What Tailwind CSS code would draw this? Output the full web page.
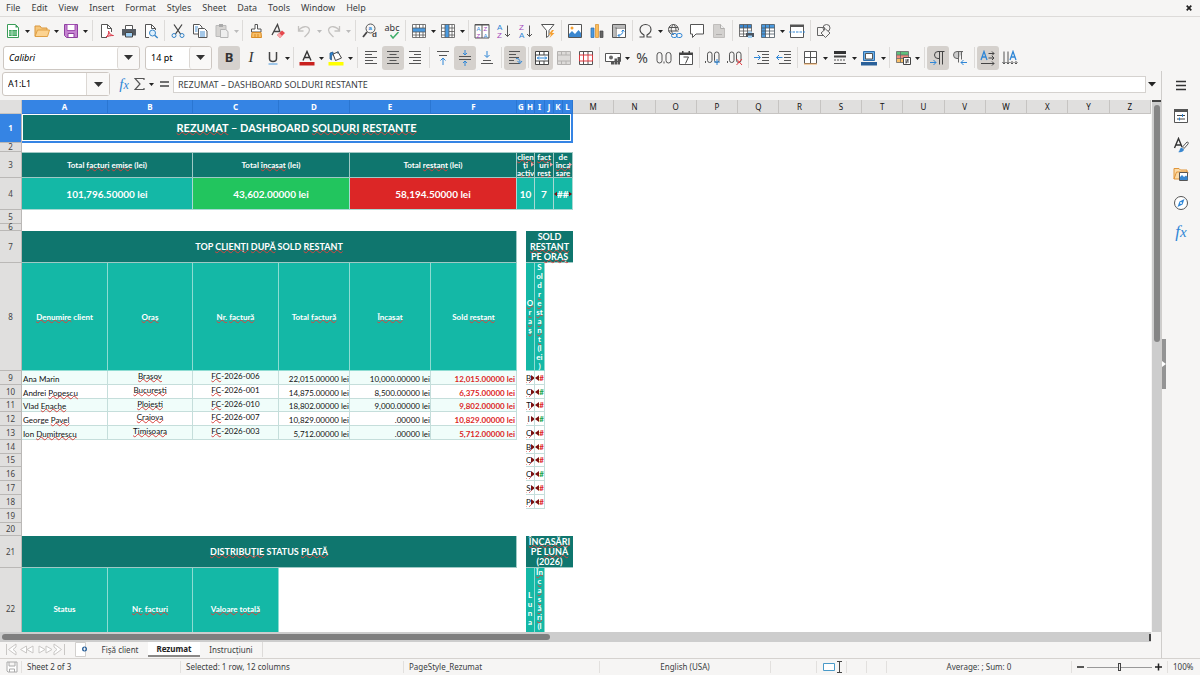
<!DOCTYPE html>
<html lang="ro">
<head>
<meta charset="utf-8">
<title>Rezumat</title>
<script src="https://cdn.jsdelivr.net/npm/@tailwindcss/browser@4"></script>
</head>
<body class="flex h-screen flex-col overflow-hidden bg-[#f6f5f4] font-['Noto_Sans',sans-serif] text-[9px] text-[#3a3d3f] [&_svg]:shrink-0">

<svg class="!hidden" aria-hidden="true">
  <symbol id="dd" viewBox="0 0 7 16"><path d="M1 7h5l-2.500 3z" fill="#222"/></symbol>
  <symbol id="ddg" viewBox="0 0 7 16"><path d="M1 7h5l-2.500 3z" fill="#bbb"/></symbol>
  <symbol id="over" viewBox="0 0 4 6"><path d="M0 0l4 3-4 3z" fill="#7a1010"/></symbol>
  <symbol id="under" viewBox="0 0 4 6"><path d="M4 0L0 3l4 3z" fill="#7a1010"/></symbol>
</svg>

<header>
  <nav class="flex h-[17px] items-center gap-[11px] border-b border-[#dddbd9] pl-[6px] pr-2" aria-label="Menu">
    <button>File</button><button>Edit</button><button>View</button><button>Insert</button><button>Format</button><button>Styles</button><button>Sheet</button><button>Data</button><button>Tools</button><button>Window</button><button>Help</button>
    <button class="ml-auto" aria-label="Close"><svg width="6" height="6" viewBox="0 0 6 6"><path d="M.7.7l4.600 4.600M5.300.7L.7 5.300" stroke="#222" stroke-width="1.700"/></svg></button>
  </nav>

  <!-- Standard toolbar -->
  <div class="flex h-[27px] items-center pl-[2px] [&_button]:flex [&_button]:h-6 [&_button]:w-[22px] [&_button]:shrink-0 [&_button]:items-center [&_button]:justify-center [&_button.w-\[7px\]]:w-[7px] [&_i]:h-[21px] [&_i]:w-[5px] [&_i]:shrink-0 [&_i]:bg-[linear-gradient(#dddbd9,#dddbd9)] [&_i]:bg-[length:1px_100%] [&_i]:bg-center [&_i]:bg-no-repeat [&_i.w-\[7px\]]:w-[7px]" role="toolbar" aria-label="Standard">
    <button aria-label="New"><svg width="16" height="16" viewBox="0 0 16 16" fill="none"><path d="M2.500 1.500h8l3 3v10h-11z" fill="#fff" stroke="#3a9c58"/><path d="M10.500 1.500v3h3z" fill="#3a9c58"/><path d="M4 7h8v6H4z" fill="#3fa65f"/><path d="M4 9h8M4 11h8M7 7v6" stroke="#c9ecd2" stroke-width=".7"/></svg></button><button class="w-[7px]" aria-label="New menu"><svg width="7" height="16"><use href="#dd"/></svg></button>
    <button aria-label="Open"><svg width="16" height="16" viewBox="0 0 16 16"><path d="M1 13V3h5l1.500 2H13v2" fill="#f6c77c" stroke="#d9963c"/><path d="M1 13.500L3.500 7h12L13.500 13.500z" fill="#fcd391" stroke="#e0a044"/></svg></button><button class="w-[7px]" aria-label="Open menu"><svg width="7" height="16"><use href="#dd"/></svg></button>
    <button aria-label="Save"><svg width="16" height="16" viewBox="0 0 16 16"><path d="M1.500 1.500h13v13h-11l-2-2z" fill="#c583d0" stroke="#8e3fa0"/><path d="M4 1.500h8v6H4z" fill="#fff" stroke="#a352b3"/><path d="M5 10.500h6v4H5z" fill="#fff" stroke="#8e3fa0"/></svg></button><button class="w-[7px]" aria-label="Save menu"><svg width="7" height="16"><use href="#dd"/></svg></button>
    <i class="w-[7px]"></i>
    <button aria-label="Export as PDF"><svg width="16" height="16" viewBox="0 0 16 16" fill="none"><path d="M8 14.500H2.500v-13h6l4 4V9" fill="#fff" stroke="#555"/><path d="M8.500 1.500v4h4" stroke="#555"/><path d="M7 14c2-1 3-4 2.500-6 1 3 3 4.500 5 4.500-3 0-5 .5-7.500 1.500z" stroke="#d93a4a" fill="#f3b0b6"/></svg></button>
    <button aria-label="Print"><svg width="16" height="16" viewBox="0 0 16 16"><path d="M4.500 2.500h7v4h-7z" fill="#fff" stroke="#555"/><path d="M1 6h14v6.500H1z" fill="#555b62"/><path d="M4.500 9.500h7v4.500h-7z" fill="#9fd0f5" stroke="#444"/></svg></button>
    <button aria-label="Print preview"><svg width="16" height="16" viewBox="0 0 16 16" fill="none"><path d="M6 14.500H2.500v-13h6l4 4V7" fill="#fff" stroke="#555"/><path d="M8.500 1.500v4h4" stroke="#555"/><circle cx="9.500" cy="10" r="3" fill="#dff0fd" stroke="#3584c8"/><path d="M11.700 12.200l3 2.800" stroke="#3584c8" stroke-width="1.400"/></svg></button>
    <i></i>
    <button aria-label="Cut"><svg width="16" height="16" viewBox="0 0 16 16" fill="none"><path d="M4 1.500l6.500 9.500M12 1.500L5.500 11" stroke="#444" stroke-width="1.300"/><circle cx="4" cy="12.500" r="2" stroke="#3584c8"/><circle cx="12" cy="12.500" r="2" stroke="#3584c8"/></svg></button>
    <button aria-label="Copy"><svg width="16" height="16" viewBox="0 0 16 16"><path d="M1.500 1.500h6l2.500 2.500v7H1.500z" fill="#fff" stroke="#555"/><path d="M6.500 5.500h6l2.500 2.500v6.500H6.500z" fill="#fff" stroke="#555"/><path d="M3 4h3M3 6h2.500M3 8h2.500M8 9h5M8 11h5M8 13h5" stroke="#4a90d0"/></svg></button>
    <button aria-label="Paste" disabled><svg width="16" height="16" viewBox="0 0 16 16"><path d="M2 2.500h10v11H2z" fill="#d6d4d2" stroke="#bbb"/><path d="M5 1h4v3H5z" fill="#aaa"/><path d="M6.500 6.500h5l2.500 2v6H6.500z" fill="#eee" stroke="#b5b5b5"/></svg></button><button class="w-[7px]" aria-label="Paste menu" disabled><svg width="7" height="16"><use href="#ddg"/></svg></button>
    <i></i>
    <button aria-label="Clone formatting"><svg width="16" height="16" viewBox="0 0 16 16"><path d="M7 1.500h2.500V6H13v3H3.500V6H7z" fill="#fff" stroke="#555"/><path d="M4 9.500h9l.5 5H3.500z" fill="#f9c069" stroke="#d98c26"/><path d="M7 11v3M10 11v3" stroke="#d98c26"/></svg></button>
    <button aria-label="Clear formatting"><svg width="16" height="16" viewBox="0 0 16 16" fill="none"><path d="M2 12L7.500 1.500 10 9M4 8.500h5.500" stroke="#444" stroke-width="1.300"/><path d="M7 12l5-4.500 3 2.500-5 5z" fill="#e5484d"/><path d="M7 12l2.200-2 3 3-2.200 2z" fill="#f7a7aa"/></svg></button>
    <i class="opacity-0"></i>
    <button aria-label="Undo" disabled><svg width="16" height="16" viewBox="0 0 16 16" fill="none" stroke="#c4c2c0" stroke-width="1.300"><path d="M1.500 3v5h5M1.500 8C4 3 12 2 12.500 7c0 3-2 4-5 7"/></svg></button><button class="w-[7px]" aria-label="Undo menu" disabled><svg width="7" height="16"><use href="#ddg"/></svg></button>
    <button aria-label="Redo" disabled><svg width="16" height="16" viewBox="0 0 16 16" fill="none" stroke="#c4c2c0" stroke-width="1.300"><path d="M13.500 3v5h-5M13.500 8C11 3 3 2 2.500 7c0 3 2 4 5 7"/></svg></button><button class="w-[7px]" aria-label="Redo menu" disabled><svg width="7" height="16"><use href="#ddg"/></svg></button>
    <i class="w-[7px]"></i>
    <button aria-label="Find and replace"><svg width="16" height="16" viewBox="0 0 16 16" fill="none" font-family="Liberation Sans" font-weight="bold"><circle cx="8.500" cy="5.500" r="4.500" stroke="#555"/><path d="M5 9L1 14" stroke="#444" stroke-width="1.800"/><text x="6.500" y="7" font-size="6" fill="#2f86d6">a</text><text x="10" y="14" font-size="8" fill="#444">d</text></svg></button>
    <button aria-label="Spelling" class="flex-col"><span class="text-[9px] leading-[9px] text-[#333]">abc</span><svg width="16" height="7" viewBox="0 0 16 7" fill="none"><path d="M6.500 3l2.500 3 5.500-6" stroke="#3fae6a" stroke-width="1.500"/></svg></button>
    <i></i>
    <button aria-label="Row"><svg width="16" height="16" viewBox="0 0 16 16"><path d="M1.500 1.500h13v13h-13z" fill="#fff"/><path d="M1.500 5h13v4h-13z" fill="#4a9ae0"/><path d="M1.500 1.500h13v13h-13zM1.500 5h13M1.500 9h13M1.500 12h13M5 1.500V5m0 4v5.500M8.500 1.500V5m0 4v5.500M12 1.500V5m0 4v5.500" fill="none" stroke="#555" stroke-width=".8"/></svg></button><button class="w-[7px]" aria-label="Row menu"><svg width="7" height="16"><use href="#dd"/></svg></button>
    <button aria-label="Column"><svg width="16" height="16" viewBox="0 0 16 16"><path d="M1.500 1.500h13v13h-13z" fill="#fff"/><path d="M5 1.500h4v13H5z" fill="#4a9ae0"/><path d="M1.500 1.500h13v13h-13zM5 1.500v13M9 1.500v13M12 1.500v13M1.500 5H5m4 0h5.500M1.500 8.500H5m4 0h5.500M1.500 12H5m4 0h5.500" fill="none" stroke="#555" stroke-width=".8"/></svg></button><button class="w-[7px]" aria-label="Column menu"><svg width="7" height="16"><use href="#dd"/></svg></button>
    <i></i>
    <button aria-label="Sort"><svg width="16" height="16" viewBox="0 0 16 16" font-family="Liberation Sans" font-size="6"><path d="M1 1.500h14v13.500H1zM8 1v14" fill="#fff" stroke="#555"/><path d="M1 1h14v1.500H1z" fill="#555"/><text x="2.500" y="7.500" fill="#2f86d6">A</text><text x="2.500" y="14.500" fill="#a347ba">Z</text><text x="9.500" y="7.500" fill="#a347ba">Z</text><text x="9.500" y="14.500" fill="#2f86d6">A</text></svg></button>
    <button aria-label="Sort ascending"><svg width="16" height="18" viewBox="0 0 16 18" font-family="Liberation Sans" font-size="8"><text x="1" y="8" fill="#2f86d6">A</text><text x="1" y="16" fill="#a347ba">Z</text><path d="M11.500 3.500v11M9 12l2.500 2.500L14 12" fill="none" stroke="#555"/></svg></button>
    <button aria-label="Sort descending"><svg width="16" height="18" viewBox="0 0 16 18" font-family="Liberation Sans" font-size="8"><text x="1" y="8" fill="#a347ba">Z</text><text x="1" y="16" fill="#2f86d6">A</text><path d="M11.500 3.500v11M9 12l2.500 2.500L14 12" fill="none" stroke="#555"/></svg></button>
    <button aria-label="AutoFilter"><svg width="16" height="16" viewBox="0 0 16 16"><path d="M1.500 1.500h12.500L9 7.500v5l-2.500 2v-7z" fill="#fff" stroke="#555"/><path d="M12 7l-3.500 4.500h2.500L9.500 15l5-5h-2.500L14 7z" fill="#f5a033"/></svg></button>
    <i></i>
    <button aria-label="Insert image"><svg width="16" height="16" viewBox="0 0 16 16"><path d="M1.500 1.500h13v13h-13z" fill="#fff" stroke="#555"/><circle cx="5" cy="5" r="1.500" fill="#f5a033"/><path d="M2 14v-3l3-3 3 3 3.500-4L14 10v4z" fill="#3a87cf"/></svg></button>
    <button aria-label="Insert chart"><svg width="16" height="16" viewBox="0 0 16 16"><path d="M2 5h3v9.500H2z" fill="#4a9ae0" stroke="#2c6aa8" stroke-width=".7"/><path d="M6.500 1.500h3v13h-3z" fill="#fabd5e" stroke="#d98c26" stroke-width=".7"/><path d="M11 8h3v6.500h-3z" fill="#666" stroke="#444" stroke-width=".7"/></svg></button>
    <button aria-label="Pivot table"><svg width="16" height="16" viewBox="0 0 16 16" fill="none"><path d="M1.500 1.500h13v13h-13zM1.500 5h13M5 1.500v13" fill="#fff" stroke="#555"/><path d="M2 2h12v2.500H2zM2 5h2.500v9H2z" fill="#bbb"/><path d="M7 12.500c3 0 5-2 5-5M10.500 8.500L12 7l1.500 1.500M8.500 11L7 12.500 8.500 14" stroke="#2f86d6"/></svg></button>
    <i></i>
    <button aria-label="Special character"><svg width="16" height="16" viewBox="0 0 16 16" fill="none" stroke="#444" stroke-width="1.100"><path d="M1.500 14h4.500v-2C3.500 10.500 2 8.500 2 6.500 2 3.500 4.500 1.500 7.500 1.500S13 3.500 13 6.500c0 2-1.500 4-4 5.500v2h4.500"/></svg></button><button class="w-[7px]" aria-label="Special character menu"><svg width="7" height="16"><use href="#dd"/></svg></button>
    <button aria-label="Hyperlink"><svg width="16" height="16" viewBox="0 0 16 16" fill="none"><path d="M6.500 1.500a5 5 0 1 0 0 10M6.500 1.500c2.500 0 5 2 5 5.500M2 4.500h9M1.500 8h10M6.500 1.500c-3 3-3 7 0 10M6.500 1.500C8.500 3 9 5 9 8" stroke="#555"/><rect x="4.500" y="10.500" width="5.500" height="4" rx="2" stroke="#2f86d6"/><rect x="9.500" y="10.500" width="5.500" height="4" rx="2" stroke="#2f86d6"/></svg></button>
    <button aria-label="Comment"><svg width="16" height="16" viewBox="0 0 16 16"><path d="M1.500 1.500h13v9.500H7l-3.500 3.500V11h-2z" fill="#fff" stroke="#555"/></svg></button>
    <button aria-label="Headers and footers" disabled><svg width="16" height="16" viewBox="0 0 16 16"><path d="M2.500 1.500h7l4 4v9h-11z" fill="#d3d1cf" stroke="#c0bebc"/><path d="M9.500 1.500v4h4M5 11.500h6" fill="#eee" stroke="#b0aeac"/></svg></button>
    <i></i>
    <button aria-label="Print area"><svg width="16" height="16" viewBox="0 0 16 16"><path d="M1.500 1.500h12v12h-12z" fill="#fff"/><path d="M1.500 1.500h12V5h-12z" fill="#3a87cf"/><path d="M1.500 1.500h12v12h-12zM1.500 5h12M1.500 8h12M1.500 11h12M5.500 1.500v12M9.500 1.500v12" fill="none" stroke="#555" stroke-width=".8"/><path d="M8 10h8v4H8z" fill="#4b5560"/><path d="M10 8.500h4V10h-4zM10 12.500h4V15h-4z" fill="#9fd0f5"/></svg></button>
    <button aria-label="Freeze rows and columns"><svg width="16" height="16" viewBox="0 0 16 16"><path d="M1.500 1.500h13v13h-13z" fill="#fff"/><path d="M1.500 1.500h13v3.500h-9v9.500h-4z" fill="#4a9ae0"/><path d="M1.500 1.500h13v13h-13zM1.500 5h13M1.500 8h13M1.500 11h13M5.500 1.500v13M9.500 1.500v13" fill="none" stroke="#4a5560" stroke-width=".8"/></svg></button><button class="w-[7px]" aria-label="Freeze menu"><svg width="7" height="16"><use href="#dd"/></svg></button>
    <button aria-label="Split window"><svg width="16" height="16" viewBox="0 0 16 16" fill="none"><path d="M1.500 2.500h13v12h-13z" fill="#fff" stroke="#555"/><path d="M1 1.500h14V4H1z" fill="#555"/><path d="M0 9h16" stroke="#2f86d6" stroke-dasharray="2.500 1"/></svg></button>
    <i></i>
    <button aria-label="Show draw functions"><svg width="16" height="16" viewBox="0 0 16 16" fill="none" stroke="#666"><path d="M1.500 4.500h7v8h-7z"/><circle cx="10.500" cy="5" r="3.500"/><path d="M9.500 6l4.500 4-4.500 4.500L5 10z" fill="#f6f5f4"/></svg></button>
  </div>

  <!-- Formatting toolbar -->
  <div class="flex h-[27px] items-center pl-[3px] [&_button]:flex [&_button]:h-6 [&_button]:w-[22px] [&_button]:shrink-0 [&_button]:items-center [&_button]:justify-center [&_button]:rounded-[3px] [&_button.w-\[7px\]]:w-[7px] [&_i]:h-[21px] [&_i]:w-[5px] [&_i]:shrink-0 [&_i]:bg-[linear-gradient(#dddbd9,#dddbd9)] [&_i]:bg-[length:1px_100%] [&_i]:bg-center [&_i]:bg-no-repeat [&_i.w-\[6px\]]:w-[6px]" role="toolbar" aria-label="Formatting">
    <div class="flex h-6 w-[137px] shrink-0 rounded-[3px] border border-[#cdc7c2] bg-white">
      <input aria-label="Font name" class="w-0 flex-1 pl-[5px] italic text-black outline-none" value="Calibri">
      <button aria-label="Font list" class="!h-full border-l border-[#dcd8d4] bg-[#f9f8f7]"><svg width="9" height="5" viewBox="0 0 9 5"><path d="M0 0h9L4.500 5z" fill="#333"/></svg></button>
    </div>
    <div class="ml-[5px] mr-[6px] flex h-6 w-[67px] shrink-0 rounded-[3px] border border-[#cdc7c2] bg-white">
      <input aria-label="Font size" class="w-0 flex-1 pl-[5px] text-black outline-none" value="14 pt">
      <button aria-label="Size list" class="!h-full border-l border-[#dcd8d4] bg-[#f9f8f7]"><svg width="9" height="5" viewBox="0 0 9 5"><path d="M0 0h9L4.500 5z" fill="#333"/></svg></button>
    </div>
    <button aria-label="Bold" aria-pressed="true" class="bg-[#d5d1cd] text-[13px] font-bold text-[#333]">B</button>
    <button aria-label="Italic" class="font-['Liberation_Serif',serif] text-[15px] italic text-[#333]">I</button>
    <button aria-label="Underline"><svg width="16" height="16" viewBox="0 0 16 16"><path d="M4.500 2v6.500c0 4 7 4 7 0V2" fill="none" stroke="#444" stroke-width="1.500"/><path d="M3.500 14h9" stroke="#4a9ae0"/></svg></button><button class="w-[7px]" aria-label="Underline menu"><svg width="7" height="16"><use href="#dd"/></svg></button>
    <i></i>
    <button aria-label="Font color"><svg width="16" height="16" viewBox="0 0 16 16"><path d="M4 10.500L8 1.500l4 9M5.500 7.500h5" fill="none" stroke="#333" stroke-width="1.400"/><path d="M.5 12h15v3.500H.5z" fill="#c9211e"/></svg></button><button class="w-[7px]" aria-label="Font color menu"><svg width="7" height="16"><use href="#dd"/></svg></button>
    <button aria-label="Background color"><svg width="16" height="16" viewBox="0 0 16 16"><path d="M5 4l5-2 3.500 6-6 2.500z" fill="#fff" stroke="#444"/><path d="M10 4V1M2 3l3-1v2L3.500 6v4L2 9z" fill="#2f86d6" stroke="#2c5d8c" stroke-width=".8"/><path d="M.5 12h15v3.500H.5z" fill="#ff0"/></svg></button><button class="w-[7px]" aria-label="Background menu"><svg width="7" height="16"><use href="#dd"/></svg></button>
    <i class="w-[6px]"></i>
    <button aria-label="Align left"><svg width="16" height="16" viewBox="0 0 16 16"><path d="M2 1.500h12M2 4.500h7M2 7.500h12M2 10.500h8M2 13.500h12" stroke="#555"/></svg></button>
    <button aria-label="Align center" aria-pressed="true" class="bg-[#d5d1cd]"><svg width="16" height="16" viewBox="0 0 16 16"><path d="M2 1.500h12M4.500 4.500h7M2 7.500h12M4.500 10.500h7M2 13.500h12" stroke="#555"/></svg></button>
    <button aria-label="Align right"><svg width="16" height="16" viewBox="0 0 16 16"><path d="M2 1.500h12M7 4.500h7M2 7.500h12M6 10.500h8M2 13.500h12" stroke="#555"/></svg></button>
    <i class="w-[6px]"></i>
    <button aria-label="Align top"><svg width="16" height="16" viewBox="0 0 16 16" fill="none"><path d="M2 1.500h12M4 5.500h8" stroke="#555"/><path d="M8 15V8M5.500 10.500L8 8l2.500 2.500" stroke="#2f86d6"/></svg></button>
    <button aria-label="Center vertically" aria-pressed="true" class="bg-[#d5d1cd]"><svg width="16" height="16" viewBox="0 0 16 16" fill="none"><path d="M2 6.500h12M2 9.500h12" stroke="#555"/><path d="M8 0v5M6 3l2 2 2-2M8 16v-5M6 13l2-2 2 2" stroke="#2f86d6"/></svg></button>
    <button aria-label="Align bottom"><svg width="16" height="16" viewBox="0 0 16 16" fill="none"><path d="M2 13.500h12M4 10.500h8" stroke="#555"/><path d="M8 1v6M5.500 5L8 7.500 10.500 5" stroke="#2f86d6"/></svg></button>
    <i class="w-[6px]"></i>
    <button aria-label="Wrap text" aria-pressed="true" class="bg-[#d5d1cd]"><svg width="16" height="16" viewBox="0 0 16 16" fill="none"><path d="M2 1.500h11M2 4.500h7M2 7.500h10M2 10.500h5M2 13.500h11" stroke="#555"/><path d="M9 8.500c3 0 4 1 4 4M10.500 11l2.500 2.500L15 11" stroke="#2f86d6"/></svg></button>
    <i></i>
    <button aria-label="Merge and center" aria-pressed="true" class="bg-[#d5d1cd]"><svg width="16" height="16" viewBox="0 0 16 16" fill="none"><path d="M1.500 1.500h13v13h-13z" fill="#fff"/><path d="M1.500 1.500h13v13h-13zM1.500 5h13M1.500 11h13M5.500 1.500V5M10 1.500V5M5.500 11v3.500M10 11v3.500" stroke="#444"/><path d="M3 8h10M5 6.500L3.500 8 5 9.500M11 6.500L12.500 8 11 9.500" stroke="#2f86d6"/></svg></button>
    <button aria-label="Merge cells" disabled><svg width="16" height="16" viewBox="0 0 16 16"><path d="M1.500 1.500h13v13h-13zM1.500 5h13M1.500 11h13M5.500 1.500V5M10 1.500V5M5.500 11v3.500M10 11v3.500" fill="#dddbd9" stroke="#b4b2b0"/></svg></button>
    <button aria-label="Split cells"><svg width="16" height="16" viewBox="0 0 16 16"><path d="M1.500 1.500h13v13h-13zM5.500 1.500V5M10 1.500V5M5.500 11v3.500M10 11v3.500" fill="#fff" stroke="#555"/><path d="M1.500 5h13v6h-13zM5.500 5v6M10 5v6" fill="#fff" stroke="#d9383f"/></svg></button>
    <i></i>
    <button aria-label="Format as currency"><svg width="16" height="16" viewBox="0 0 16 16"><path d="M.5 3.500h15v8H.5z" fill="#fff" stroke="#555"/><circle cx="6" cy="7.500" r="2" fill="#666"/><path d="M6 11h3v3.500H6zM9.500 8.500h2.500v6H9.500zM12.500 7H15v7.500h-2.500z" fill="#555"/></svg></button><button class="w-[7px]" aria-label="Currency menu"><svg width="7" height="16"><use href="#dd"/></svg></button>
    <button aria-label="Format as percent" class="text-[14px]">%</button>
    <button aria-label="Format as number"><svg width="16" height="16" viewBox="0 0 16 16" fill="none" stroke="#555"><rect x="1" y="2.500" width="5" height="10.500" rx="2.500"/><rect x="10" y="2.500" width="5" height="10.500" rx="2.500"/><path d="M8 11.500v2"/></svg></button>
    <button aria-label="Format as date"><svg width="16" height="16" viewBox="0 0 16 16"><path d="M1.500 3.500h13v11h-13z" fill="#fff" stroke="#555"/><path d="M1 2.500h14V5H1zM4 1h1.500v2H4zM10.500 1H12v2h-1.500z" fill="#444"/><path d="M5.500 7h5L7.500 13.500" fill="none" stroke="#444"/></svg></button>
    <i></i>
    <button aria-label="Add decimal place"><svg width="18" height="16" viewBox="0 0 18 16" fill="none" stroke="#555"><path d="M1.500 11v2"/><rect x="3.500" y="2" width="4.500" height="10.500" rx="2.200"/><rect x="10.500" y="2" width="4.500" height="10.500" rx="2.200"/><path d="M13 9v6M10 12h6" stroke="#2f86d6"/></svg></button>
    <button aria-label="Delete decimal place"><svg width="18" height="16" viewBox="0 0 18 16" fill="none" stroke="#555"><path d="M1.500 11v2"/><rect x="3.500" y="2" width="4.500" height="10.500" rx="2.200"/><rect x="10.500" y="2" width="4.500" height="10.500" rx="2.200"/><path d="M10.500 9l5.500 6M16 9l-5.500 6" stroke="#e5383f"/></svg></button>
    <i></i>
    <button aria-label="Increase indent"><svg width="16" height="16" viewBox="0 0 16 16" fill="none"><path d="M3 1.500h12M8 4.500h7M8 7.500h7M8 10.500h7M3 13.500h12" stroke="#555"/><path d="M0 7.500h6M4 5l2.500 2.500L4 10" stroke="#2f86d6"/></svg></button>
    <button aria-label="Decrease indent"><svg width="16" height="16" viewBox="0 0 16 16" fill="none"><path d="M3 1.500h12M8 4.500h7M8 7.500h7M8 10.500h7M3 13.500h12" stroke="#555"/><path d="M6.500 7.500h-6M3 5L.5 7.500 3 10" stroke="#2f86d6"/></svg></button>
    <i></i>
    <button aria-label="Borders"><svg width="16" height="16" viewBox="0 0 16 16"><path d="M1.500 1.500h12v12h-12z" fill="#fff" stroke="#555"/><path d="M7.500 1.500v12M1.500 7.500h12" stroke="#555"/><path d="M1 14h13" stroke="#f0a85a"/></svg></button><button class="w-[7px]" aria-label="Borders menu"><svg width="7" height="16"><use href="#dd"/></svg></button>
    <button aria-label="Border style"><svg width="16" height="16" viewBox="0 0 16 16"><path d="M2 2.500h12" stroke="#333" stroke-width="3"/><path d="M2 6.500h12" stroke="#444" stroke-width="2"/><path d="M2 10h12" stroke="#555" stroke-dasharray="2 1"/><path d="M2 13.500h12" stroke="#555"/></svg></button><button class="w-[7px]" aria-label="Border style menu"><svg width="7" height="16"><use href="#dd"/></svg></button>
    <button aria-label="Border color"><svg width="16" height="16" viewBox="0 0 16 16"><path d="M2.500 1.500h11v9h-11z" fill="#6cb0e8" stroke="#2f6fae"/><path d="M4.500 3.500h7v5.500h-7z" fill="#fff" stroke="#555"/><path d="M0 12h16v3.500H0z" fill="#2a6099"/></svg></button><button class="w-[7px]" aria-label="Border color menu"><svg width="7" height="16"><use href="#dd"/></svg></button>
    <i></i>
    <button aria-label="Conditional formatting"><svg width="16" height="16" viewBox="0 0 16 16"><path d="M1.500 1.500h12v11h-12z" fill="#fff"/><path d="M1.500 1.500h12V5h-12z" fill="#5fbf7c"/><path d="M1.500 5h12v3.500h-12z" fill="#f08a7e"/><path d="M1.500 8.500h8v4h-8z" fill="#f9c069"/><path d="M1.500 1.500h12v11h-12zM1.500 5h12M1.500 8.500h12M5.500 1.500v11" fill="none" stroke="#666" stroke-width=".8"/><path d="M8.500 7.500h7v7h-7z" fill="#fff" stroke="#444"/><path d="M10 10h4M10 12h4M13 9l-2 4.500" stroke="#444" stroke-width=".9"/></svg></button><button class="w-[7px]" aria-label="Conditional menu"><svg width="7" height="16"><use href="#dd"/></svg></button>
    <i class="w-[6px]"></i>
    <button aria-label="Left-to-right" aria-pressed="true" class="bg-[#d5d1cd]"><svg width="16" height="16" viewBox="0 0 16 16" fill="none"><path d="M14.500 1.500H8a3.500 3.500 0 0 0 0 7h1.500M9.500 1.500v13M12.500 1.500v13" stroke="#444"/><path d="M0 12.500h6M3.500 10L6 12.500 3.500 15" stroke="#2f86d6"/></svg></button>
    <button aria-label="Right-to-left"><svg width="16" height="16" viewBox="0 0 16 16" fill="none"><path d="M11 1.500H5a3.500 3.500 0 0 0 0 7h1.500z" fill="#ccc"/><path d="M11 1.500H5a3.500 3.500 0 0 0 0 7h1.500M6.500 1.500v11M9.500 1.500v8" stroke="#666"/><path d="M15 12.500H9M11.500 10L9 12.500l2.500 2.500" stroke="#2f86d6"/></svg></button>
    <i class="w-[6px]"></i>
    <button aria-label="Horizontal text" aria-pressed="true" class="bg-[#d5d1cd]"><svg width="16" height="16" viewBox="0 0 16 16" fill="none"><path d="M1 10L4 1.500 7 10M2 7h4" stroke="#2f86d6" stroke-width="1.300"/><path d="M8.500 3.500H14M12 1.500l2 2-2 2M8.500 8H14M12 6l2 2-2 2M1 13.500h13M12 11.500l2 2-2 2" stroke="#444"/></svg></button>
    <button aria-label="Vertical text"><svg width="16" height="16" viewBox="0 0 16 16" fill="none"><path d="M8 10l3-8.500L14 10M9 7h4" stroke="#2f86d6" stroke-width="1.300"/><path d="M2 1.500V14M.5 12L2 14l1.500-2M6 1.500V14M4.500 12L6 14l1.500-2M10 11v3M8.500 12.500L10 14l1.500-1.500M14 11v3M12.500 12.500L14 14l1.500-1.500" stroke="#555"/></svg></button>
  </div>
</header>

<div class="flex min-h-0 flex-1">
  <main class="flex min-w-0 flex-1 flex-col">
    <!-- Formula bar -->
    <div class="flex h-[29px] shrink-0 items-center pb-[3px] pl-[2px] pr-[5px]">
      <div class="flex h-6 w-[108px] shrink-0 rounded-[3px] border border-[#cdc7c2] bg-white">
        <input aria-label="Name box" class="w-0 flex-1 pl-[5px] text-black outline-none" value="A1:L1">
        <button aria-label="Name list" class="flex w-[23px] items-center justify-center border-l border-[#dcd8d4] bg-[#f9f8f7]"><svg width="9" height="5" viewBox="0 0 9 5"><path d="M0 0h9L4.500 5z" fill="#333"/></svg></button>
      </div>
      <button aria-label="Function wizard" class="ml-[8px] w-3 font-['Liberation_Serif',serif] text-[15px] italic leading-4 text-[#2f86d6]">f<span class="text-[12px]">x</span></button>
      <button aria-label="Select function" class="ml-1"><svg width="11" height="14" viewBox="0 0 11 14"><path d="M10 3V1.500H1L6 7l-5 5.500h9V11" fill="none" stroke="#555" stroke-width="1.200"/></svg></button>
      <button aria-label="Function menu" class="ml-[3px]"><svg width="7" height="16"><use href="#dd"/></svg></button>
      <button aria-label="Formula" class="ml-[5px]"><svg width="9" height="8" viewBox="0 0 9 8"><path d="M0 2h9M0 6h9" stroke="#444" stroke-width="1.500"/></svg></button>
      <input aria-label="Formula input" class="ml-1 h-[17px] min-w-0 flex-1 border border-[#d5d2cf] bg-white pl-1 text-[9px] text-[#3a3d3f] outline-none" value="REZUMAT – DASHBOARD SOLDURI RESTANTE">
      <button aria-label="Expand formula bar" class="ml-[2px]"><svg width="8" height="5" viewBox="0 0 8 5"><path d="M0 0h8L4 4.500z" fill="#222"/></svg></button>
    </div>

    <div class="flex min-h-0 flex-1">
      <div class="min-w-0 flex-1 overflow-hidden bg-white">
        <table class="w-full table-fixed border-separate border-spacing-0 text-center font-['Lato',sans-serif] text-[8px] leading-[10px] text-[#111] [&_tbody_th]:border-b [&_tbody_th]:border-r [&_tbody_th]:border-[#bab8b6] [&_tbody_th]:bg-[#e0dfde] [&_tbody_th]:p-0 [&_tbody_th]:font-['Noto_Sans',sans-serif] [&_tbody_th]:font-normal [&_tbody_th]:text-[#444] [&_td]:p-0 [&_div]:overflow-hidden [&_u]:underline [&_u]:decoration-[#d8433f] [&_u]:decoration-wavy [&_u]:decoration-1 [&_u]:[text-decoration-skip-ink:none] [&_u]:[text-underline-offset:-1px]">
          <colgroup><col class="w-[22px]"><col class="w-[86px]"><col class="w-[85px]"><col class="w-[86px]"><col class="w-[71px]"><col class="w-[81px]"><col class="w-[86px]"><col class="w-[9px]"><col class="w-[9px]"><col class="w-[10px]"><col class="w-[9px]"><col class="w-[9px]"><col class="w-[10px]"><col><col><col><col><col><col><col><col><col><col><col><col><col><col></colgroup>
          <thead class="font-['Noto_Sans',sans-serif] [&_th]:border-b [&_th]:border-r [&_th]:border-[#c6c4c2] [&_th]:bg-[#e0dfde] [&_th]:p-0 [&_th]:font-normal [&_th.font-bold]:border-[#2a76d2] [&_th.font-bold]:bg-[#3584e4] [&_th.font-bold]:font-bold [&_th.font-bold]:text-white">
            <tr class="h-[14px]"><th></th><th class="font-bold">A</th><th class="font-bold">B</th><th class="font-bold">C</th><th class="font-bold">D</th><th class="font-bold">E</th><th class="font-bold">F</th><th class="font-bold">G</th><th class="font-bold">H</th><th class="font-bold">I</th><th class="font-bold">J</th><th class="font-bold">K</th><th class="font-bold">L</th><th>M</th><th>N</th><th>O</th><th>P</th><th>Q</th><th>R</th><th>S</th><th>T</th><th>U</th><th>V</th><th>W</th><th>X</th><th>Y</th><th>Z</th></tr>
          </thead>
          <tbody>
            <tr class="h-[29px]"><th class="!bg-[#3584e4] !font-bold !text-white">1</th><td colspan="12" class="border-2 border-l-0 border-t-0 border-[#3584e4] bg-[#0f766e] text-[11px] font-bold text-white shadow-[inset_0_0_0_1px_#ffffff]"><u>REZUMAT</u> – DASHBOARD <u>SOLDURI</u> <u>RESTANTE</u></td></tr>
            <tr class="h-[9px] leading-[8px]"><th>2</th></tr>
            <tr class="h-[26px] font-bold text-white [&_td]:border-b [&_td]:border-r [&_td]:border-t [&_td]:border-[#9fc9c5] [&_td]:bg-[#0f766e]"><th>3</th><td colspan="2">Total <u>facturi</u> <u>emise</u> (lei)</td><td colspan="2">Total <u>încasat</u> (lei)</td><td colspan="2">Total <u>restant</u> (lei)</td>
              <td colspan="2"><div class="relative h-6 leading-[8px]"><u>clien</u><br>ți<br><u>activ</u><svg class="absolute right-0 top-[9px]" width="3" height="5" viewBox="0 0 4 6"><path d="M0 0l4 3-4 3z" fill="#f3a5a5"/></svg></div></td>
              <td colspan="2"><div class="relative h-6 leading-[8px]"><u>fact</u><br>uri<br><u>rest</u><svg class="absolute right-0 top-[9px]" width="3" height="5" viewBox="0 0 4 6"><path d="M0 0l4 3-4 3z" fill="#f3a5a5"/></svg></div></td>
              <td colspan="2"><div class="relative h-6 leading-[8px]">de<br><u>înca</u><br><u>sare</u><svg class="absolute right-0 top-[9px]" width="3" height="5" viewBox="0 0 4 6"><path d="M0 0l4 3-4 3z" fill="#f3a5a5"/></svg></div></td></tr>
            <tr class="h-[32px] text-[10px] font-bold text-white [&_td]:border-b [&_td]:border-r [&_td]:border-[#a9d9d3]"><th class="text-[8px]">4</th><td colspan="2" class="bg-[#14b8a6]">101,796.50000 lei</td><td colspan="2" class="bg-[#22c55e]">43,602.00000 lei</td><td colspan="2" class="bg-[#dc2626]">58,194.50000 lei</td><td colspan="2" class="bg-[#14b8a6]">10</td><td colspan="2" class="bg-[#14b8a6]">7</td><td colspan="2" class="bg-[#14b8a6]"><div class="flex items-center justify-center"><svg width="3" height="6"><use href="#under"/></svg><span class="w-[12px] shrink-0 overflow-hidden text-left">###</span><svg width="3" height="6"><use href="#over"/></svg></div></td></tr>
            <tr class="h-[14px]"><th>5</th></tr>
            <tr class="h-[7px] leading-[6px]"><th>6</th></tr>
            <tr class="h-[32px] text-[9px] font-bold text-white"><th class="text-[8px]">7</th><td colspan="6" class="border-b border-r border-[#9fc9c5] bg-[#0f766e]">TOP <u>CLIENȚI</u> <u>DUPĂ</u> SOLD <u>RESTANT</u></td><td></td><td colspan="5" class="border-b border-[#9fc9c5] bg-[#0f766e]">SOLD<br><u>RESTANT</u><br>PE <u>ORAȘ</u></td></tr>
            <tr class="h-[108px] font-bold text-white [&_.bg-\[\#14b8a6\]]:border-b [&_.bg-\[\#14b8a6\]]:border-r [&_.bg-\[\#14b8a6\]]:border-[#8ddcd2]"><th>8</th><td class="bg-[#14b8a6]"><u>Denumire</u> client</td><td class="bg-[#14b8a6]"><u>Oraș</u></td><td class="bg-[#14b8a6]"><u>Nr.</u> <u>factură</u></td><td class="bg-[#14b8a6]">Total <u>factură</u></td><td class="bg-[#14b8a6]"><u>Încasat</u></td><td class="bg-[#14b8a6]">Sold <u>restant</u></td><td></td><td class="bg-[#14b8a6] leading-[9px]"><u>O<br>r<br>a<br>ș</u></td><td class="bg-[#14b8a6]"><div class="h-[107px] leading-[9px]">S<br>ol<br>d<br><u>r<br>e<br>st<br>a<br>n<br>t</u><br>(l<br>ei<br>)</div></td></tr>
          </tbody>
          <tbody class="[&_td:nth-child(-n+7)]:border-b [&_td:nth-child(-n+7)]:border-r [&_td]:border-[#c5dedb] [&_td]:align-bottom [&_td:nth-child(2)]:pl-px [&_td:nth-child(2)]:text-left [&_td:nth-child(3)]:align-top [&_td:nth-child(4)]:align-top [&_td:nth-child(5)]:text-right [&_td:nth-child(6)]:text-right [&_td:nth-child(7)]:pr-px [&_td:nth-child(7)]:text-right [&_td:nth-child(7)]:font-bold [&_td:nth-child(7)]:text-[#dc2626] [&_td:nth-child(9)]:border-b [&_td:nth-child(9)]:border-r [&_td:nth-child(10)]:border-b [&_td:nth-child(10)]:border-r [&_td:nth-child(10)]:font-bold [&_div]:flex [&_div]:h-[12px] [&_div]:items-center [&_span]:w-[5px] [&_span]:shrink-0 [&_span]:overflow-hidden [&_tr:nth-child(odd)_td:nth-child(-n+7)]:bg-[#f0fdfa]">
            <tr class="h-[14px]"><th>9</th><td>Ana Marin</td><td><u>Brașov</u></td><td><u>FC</u>-2026-006</td><td>22,015.00000 lei</td><td>10,000.00000 lei</td><td>12,015.00000 lei</td><td></td><td><div><span><u>B</u></span><svg width="4" height="6"><use href="#over"/></svg></div></td><td class="text-[#dc2626]"><div><svg width="4" height="6"><use href="#under"/></svg><span>#</span></div></td></tr>
            <tr class="h-[14px]"><th>10</th><td>Andrei <u>Popescu</u></td><td><u>București</u></td><td><u>FC</u>-2026-001</td><td>14,875.00000 lei</td><td>8,500.00000 lei</td><td>6,375.00000 lei</td><td></td><td><div><span><u>C</u></span><svg width="4" height="6"><use href="#over"/></svg></div></td><td class="text-[#16a34a]"><div><svg width="4" height="6"><use href="#under"/></svg><span>#</span></div></td></tr>
            <tr class="h-[13px]"><th>11</th><td>Vlad <u>Enache</u></td><td><u>Ploiești</u></td><td><u>FC</u>-2026-010</td><td>18,802.00000 lei</td><td>9,000.00000 lei</td><td>9,802.00000 lei</td><td></td><td><div><span><u>T</u></span><svg width="4" height="6"><use href="#over"/></svg></div></td><td class="text-[#dc2626]"><div><svg width="4" height="6"><use href="#under"/></svg><span>#</span></div></td></tr>
            <tr class="h-[14px]"><th>12</th><td>George <u>Pavel</u></td><td><u>Craiova</u></td><td><u>FC</u>-2026-007</td><td>10,829.00000 lei</td><td>.00000 lei</td><td>10,829.00000 lei</td><td></td><td><div><span><u>I</u></span><svg width="4" height="6"><use href="#over"/></svg></div></td><td class="text-[#16a34a]"><div><svg width="4" height="6"><use href="#under"/></svg><span>#</span></div></td></tr>
            <tr class="h-[14px]"><th>13</th><td>Ion <u>Dumitrescu</u></td><td><u>Timișoara</u></td><td><u>FC</u>-2026-003</td><td>5,712.00000 lei</td><td>.00000 lei</td><td>5,712.00000 lei</td><td></td><td><div><span><u>C</u></span><svg width="4" height="6"><use href="#over"/></svg></div></td><td class="text-[#dc2626]"><div><svg width="4" height="6"><use href="#under"/></svg><span>#</span></div></td></tr>
          </tbody>
          <tbody class="[&_td]:border-[#c5dedb] [&_td:nth-child(3)]:border-b [&_td:nth-child(3)]:border-r [&_td:nth-child(4)]:border-b [&_td:nth-child(4)]:border-r [&_td:nth-child(4)]:font-bold [&_div]:flex [&_div]:h-[12px] [&_div]:items-center [&_span]:w-[5px] [&_span]:shrink-0 [&_span]:overflow-hidden">
            <tr class="h-[14px]"><th>14</th><td colspan="7"></td><td><div><span><u>B</u></span><svg width="4" height="6"><use href="#over"/></svg></div></td><td class="text-[#dc2626]"><div><svg width="4" height="6"><use href="#under"/></svg><span>#</span></div></td></tr>
            <tr class="h-[13px]"><th>15</th><td colspan="7"></td><td><div><span><u>C</u></span><svg width="4" height="6"><use href="#over"/></svg></div></td><td class="text-[#dc2626]"><div><svg width="4" height="6"><use href="#under"/></svg><span>#</span></div></td></tr>
            <tr class="h-[14px]"><th>16</th><td colspan="7"></td><td><div><span><u>C</u></span><svg width="4" height="6"><use href="#over"/></svg></div></td><td class="text-[#16a34a]"><div><svg width="4" height="6"><use href="#under"/></svg><span>#</span></div></td></tr>
            <tr class="h-[14px]"><th>17</th><td colspan="7"></td><td><div><span><u>S</u></span><svg width="4" height="6"><use href="#over"/></svg></div></td><td class="text-[#dc2626]"><div><svg width="4" height="6"><use href="#under"/></svg><span>#</span></div></td></tr>
            <tr class="h-[14px]"><th>18</th><td colspan="7"></td><td><div><span><u>P</u></span><svg width="4" height="6"><use href="#over"/></svg></div></td><td class="text-[#dc2626]"><div><svg width="4" height="6"><use href="#under"/></svg><span>#</span></div></td></tr>
          </tbody>
          <tbody>
            <tr class="h-[14px]"><th>19</th></tr>
            <tr class="h-[13px]"><th>20</th></tr>
            <tr class="h-[32px] text-[9px] font-bold text-white"><th class="text-[8px]">21</th><td colspan="6" class="border-b border-r border-[#9fc9c5] bg-[#0f766e]"><u>DISTRIBUȚIE</u> STATUS <u>PLATĂ</u></td><td></td><td colspan="5" class="border-b border-[#9fc9c5] bg-[#0f766e]"><u>ÎNCASĂRI</u><br>PE <u>LUNĂ</u><br>(2026)</td></tr>
            <tr class="h-[82px] font-bold text-white [&_.bg-\[\#14b8a6\]]:border-r [&_.bg-\[\#14b8a6\]]:border-[#8ddcd2]"><th>22</th><td class="bg-[#14b8a6]">Status</td><td class="bg-[#14b8a6]"><u>Nr.</u> <u>facturi</u></td><td class="bg-[#14b8a6]"><u>Valoare</u> <u>totală</u></td><td colspan="4"></td><td class="bg-[#14b8a6] leading-[9px]">L<br>u<br>n<br>a</td><td class="bg-[#14b8a6]"><div class="h-[82px] leading-[9px]"><u>În<br>c<br>a<br>s<br>ă<br>ri</u><br>(l</div></td></tr>
          </tbody>
        </table>
      </div>
      <div class="ml-px w-[9px] shrink-0 border-t-2 border-[#444] bg-[#cdcdcd] pt-[3px]"><div class="mx-auto h-[237px] w-[6px] rounded-full bg-[#858585]"></div></div>
    </div>

    <div class="mr-[10px] flex h-[10px] shrink-0 items-center bg-[#cdcdcd] pl-[2px]"><div class="h-[6px] w-[548px] rounded-full bg-[#7f7f7f]"></div><span class="ml-auto h-[7px] w-[2px] bg-[#444]"></span></div>

    <!-- Sheet tabs -->
    <div class="flex h-4 shrink-0 items-start">
      <div class="ml-[5px] flex w-[69px]" aria-label="Sheet navigation">
        <svg width="62" height="15" viewBox="0 0 62 15" fill="#fff" stroke="#c9c7c5"><path d="M1.500 2v11M3.500 7.500L11 2v3L8 7.500l3 2.500v3zM15.500 7.500l6-3.500v7zM22 7.500L28 4v7zM34 4l6 3.500L34 11zM41 4l6 3.500L41 11zM49 2l7.500 5.500L49 13v-3l3-2.500L49 5zM59.500 2v11"/></svg>
      </div>
      <button aria-label="Add sheet" class="w-[18px]"><svg width="15" height="15" viewBox="0 0 15 15"><path d="M1.500.5h10v14h-10z" fill="#fff" stroke="#d2d0ce"/><circle cx="10.500" cy="7" r="2.500" fill="#2a6099"/><path d="M9 7h3M10.500 5.500v3" stroke="#fff" stroke-width=".9"/></svg></button>
      <div class="flex h-[15px] flex-1 items-stretch text-[8px]" role="tablist">
        <button role="tab" class="w-14">Fișă client</button>
        <button role="tab" aria-selected="true" class="w-[52px] border-b-2 border-[#8a8886] bg-white font-bold text-[#222]">Rezumat</button>
        <button role="tab" class="w-[63px] border-r border-[#dddbd9]">Instrucțiuni</button>
      </div>
    </div>
  </main>

  <!-- Sidebar -->
  <aside class="relative flex w-[39px] shrink-0 flex-col items-center border-l border-[#cfcdcb] pt-[5px] [&_button]:flex [&_button]:h-[29px] [&_button]:items-center">
    <button aria-label="Sidebar settings" class="!h-[17px]"><svg width="16" height="16" viewBox="0 0 16 16"><path d="M3 4.500h10M3 8.500h10M3 12.500h10" stroke="#333" stroke-width="1.300"/></svg></button>
    <div class="mt-2 flex flex-col">
      <button aria-label="Properties"><svg width="16" height="16" viewBox="0 0 16 16" fill="none"><path d="M1.500 1.500h13v13h-13z" fill="#fff" stroke="#555"/><path d="M1 1h14v3H1z" fill="#555"/><path d="M4 7.500h8M4 11h8" stroke="#444"/><path d="M9.500 6v3M6.500 9.500v3" stroke="#2f86d6"/></svg></button>
      <button aria-label="Styles"><svg width="16" height="16" viewBox="0 0 16 16" fill="none"><path d="M1.500 11L5.500 1.500 9 10M3 8h5" stroke="#333" stroke-width="1.400"/><path d="M9.500 10l4.500-5c1.500 0 1.500 1 1 2l-4 4.500z" fill="#fff" stroke="#555"/><path d="M5 15c2 0 1-3 3.500-4.500l2.500 2C10.500 15 8 15.500 5 15z" fill="#3a87cf"/></svg></button>
      <button aria-label="Gallery"><svg width="16" height="16" viewBox="0 0 16 16"><path d="M1 13V2.500h5L7.500 4H14v2M1 13L3.500 6H15l-2 7z" fill="#fbdba8" stroke="#e0953a"/><path d="M6.500 6.500h8v8h-8z" fill="#fff" stroke="#555"/><path d="M7 14v-3l2-2 2 2 2-1.500 1.500 1.500v3z" fill="#3a87cf"/></svg></button>
      <button aria-label="Navigator"><svg width="16" height="16" viewBox="0 0 16 16"><circle cx="8" cy="8" r="6.500" fill="#fff" stroke="#555"/><path d="M11.500 4L9.500 9.500 4.500 12l2-5.500z" fill="#2f86d6"/><circle cx="8" cy="8" r="1" fill="#fff"/></svg></button>
      <button aria-label="Functions" class="justify-center font-['Liberation_Serif',serif] text-[17px] italic leading-4 text-[#2f86d6]">f<span class="text-[15px]">x</span></button>
    </div>
    <button aria-label="Hide sidebar" class="absolute left-0 top-[268px] !h-[50px] w-[4px] bg-[#949494]"><svg width="4" height="6" viewBox="0 0 4 6"><path d="M0 0l4 3-4 3z" fill="#fff"/></svg></button>
  </aside>
</div>

<footer class="flex h-[17px] shrink-0 items-center border-t border-[#d5d2cf] text-[8px] [&>*]:flex [&>*]:h-3 [&>*]:shrink-0 [&>*]:items-center [&>*]:border-[#e2e0de] [&>*+*]:border-l">
  <span class="w-[21px] pl-[6px]"><svg width="12" height="12" viewBox="0 0 12 12"><path d="M1 1h10v10H2l-1-1zM3 1v4h6V1M3.500 11V8h5v3" fill="#fff" stroke="#aaa"/></svg></span>
  <span class="w-[159px] pl-[5px]">Sheet 2 of 3</span>
  <span class="w-[223px] pl-[5px]">Selected: 1 row, 12 columns</span>
  <span class="w-[196px] pl-[5px]">PageStyle_Rezumat</span>
  <span class="w-[171px] justify-center">English (USA)</span>
  <span class="w-[46px]"></span>
  <span class="w-[30px] pl-[6px]"><svg width="20" height="12" viewBox="0 0 20 12" fill="none"><path d="M.5 2.500h11v7H.5z" fill="#fff" stroke="#4a9ac8"/><path d="M14 .5h5M14 11.500h5M16.500 .5v11" stroke="#444"/></svg></span>
  <span class="w-5"></span>
  <span class="w-5"></span>
  <span class="min-w-0 flex-1 justify-center">Average: ; Sum: 0</span>
  <span class="w-[96px] gap-[3px] pl-[5px]"><button aria-label="Zoom out"><svg width="7" height="8" viewBox="0 0 7 8"><path d="M0 4h7" stroke="#222" stroke-width="1.500"/></svg></button><input type="range" aria-label="Zoom" value="50" class="h-2 w-[65px] appearance-none bg-[linear-gradient(#999,#999)] bg-[length:100%_1px] bg-center bg-no-repeat [&::-webkit-slider-thumb]:h-2 [&::-webkit-slider-thumb]:w-[3px] [&::-webkit-slider-thumb]:appearance-none [&::-webkit-slider-thumb]:border [&::-webkit-slider-thumb]:border-[#444] [&::-webkit-slider-thumb]:bg-[#eee]"><button aria-label="Zoom in"><svg width="7" height="8" viewBox="0 0 7 8"><path d="M0 4h7M3.500.5v7" stroke="#222" stroke-width="1.500"/></svg></button></span>
  <button class="w-[33px] pl-[5px]">100%</button>
</footer>
</body>
</html>
